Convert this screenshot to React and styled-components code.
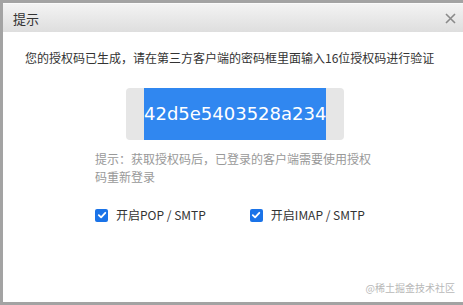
import React from "react";
import styled, { createGlobalStyle } from "styled-components";

const Global = createGlobalStyle`
  html, body { margin: 0; padding: 0; }
  body {
    background: #a3a3a3;
    font-family: "Microsoft YaHei", "Noto Sans CJK SC", "Liberation Sans", sans-serif;
    width: 463px;
    height: 305px;
    overflow: hidden;
  }
`;

const Backdrop = styled.div`
  width: 463px;
  height: 305px;
  box-sizing: border-box;
  padding: 3px 0 3px 3px;
  display: flex;
`;

const Dialog = styled.div`
  position: relative;
  flex: 1;
  display: flex;
  flex-direction: column;
  background: #fff;
`;

const TitleBar = styled.div`
  height: 29px;
  display: flex;
  align-items: center;
  justify-content: space-between;
  padding: 0 7px 0 10px;
  background: linear-gradient(#f3f3f3, #dedede);
  border-top: 1px solid #fafafa;
  box-sizing: border-box;
`;

const Title = styled.span`
  font-size: 13px;
  color: #333;
`;

const Close = styled.svg`
  width: 11px;
  height: 11px;
`;

const Body = styled.div`
  display: flex;
  flex-direction: column;
  align-items: flex-start;
  padding: 17px 0 0 22px;
`;

const Intro = styled.p`
  margin: 0;
  font-size: 12px;
  line-height: 18px;
  color: #333;
  white-space: nowrap;
`;

const CodeBox = styled.div`
  margin: 21px 0 0 101px;
  width: 218px;
  height: 52px;
  box-sizing: border-box;
  padding-left: 18px;
  background: #e6e6e6;
  border-radius: 4px;
  display: flex;
`;

const Code = styled.span`
  background: #3087f0;
  color: #fff;
  font-family: "DejaVu Sans", Verdana, sans-serif;
  font-size: 18px;
  line-height: 52px;
  height: 52px;
`;

const Hint = styled.p`
  margin: 10px 0 0 70px;
  width: 276px;
  font-size: 12px;
  line-height: 18px;
  color: #999;
`;

const Options = styled.div`
  margin: 20px 0 0 70px;
  display: flex;
  align-items: center;
  gap: 44px;
`;

const Option = styled.label`
  display: flex;
  align-items: center;
  gap: 8px;
  font-size: 12px;
  line-height: 18px;
  color: #333;
`;

const Box = styled.span`
  width: 13px;
  height: 13px;
  border-radius: 2px;
  background: #1a73e8;
  display: flex;
  align-items: center;
  justify-content: center;
`;

const Watermark = styled.span`
  position: absolute;
  right: 8px;
  bottom: 7px;
  font-size: 10px;
  color: #b8b8b8;
`;

function Check({ label }) {
  return (
    <Option>
      <Box>
        <svg width="10" height="10" viewBox="0 0 10 10">
          <path d="M1.8 5.2 L4.1 7.4 L8.3 2.8" fill="none" stroke="#fff" strokeWidth="1.8" strokeLinecap="round" strokeLinejoin="round" />
        </svg>
      </Box>
      {label}
    </Option>
  );
}

export default function App() {
  return (
    <>
      <Global />
      <Backdrop>
        <Dialog>
          <TitleBar>
            <Title>提示</Title>
            <Close viewBox="0 0 11 11">
              <path d="M1 1 L10 10 M10 1 L1 10" stroke="#8a8a8a" strokeWidth="1.6" />
            </Close>
          </TitleBar>
          <Body>
            <Intro>您的授权码已生成，请在第三方客户端的密码框里面输入16位授权码进行验证</Intro>
            <CodeBox>
              <Code>42d5e5403528a234</Code>
            </CodeBox>
            <Hint>提示：获取授权码后，已登录的客户端需要使用授权码重新登录</Hint>
            <Options>
              <Check label="开启POP / SMTP" />
              <Check label="开启IMAP / SMTP" />
            </Options>
          </Body>
          <Watermark>@稀土掘金技术社区</Watermark>
        </Dialog>
      </Backdrop>
    </>
  );
}
